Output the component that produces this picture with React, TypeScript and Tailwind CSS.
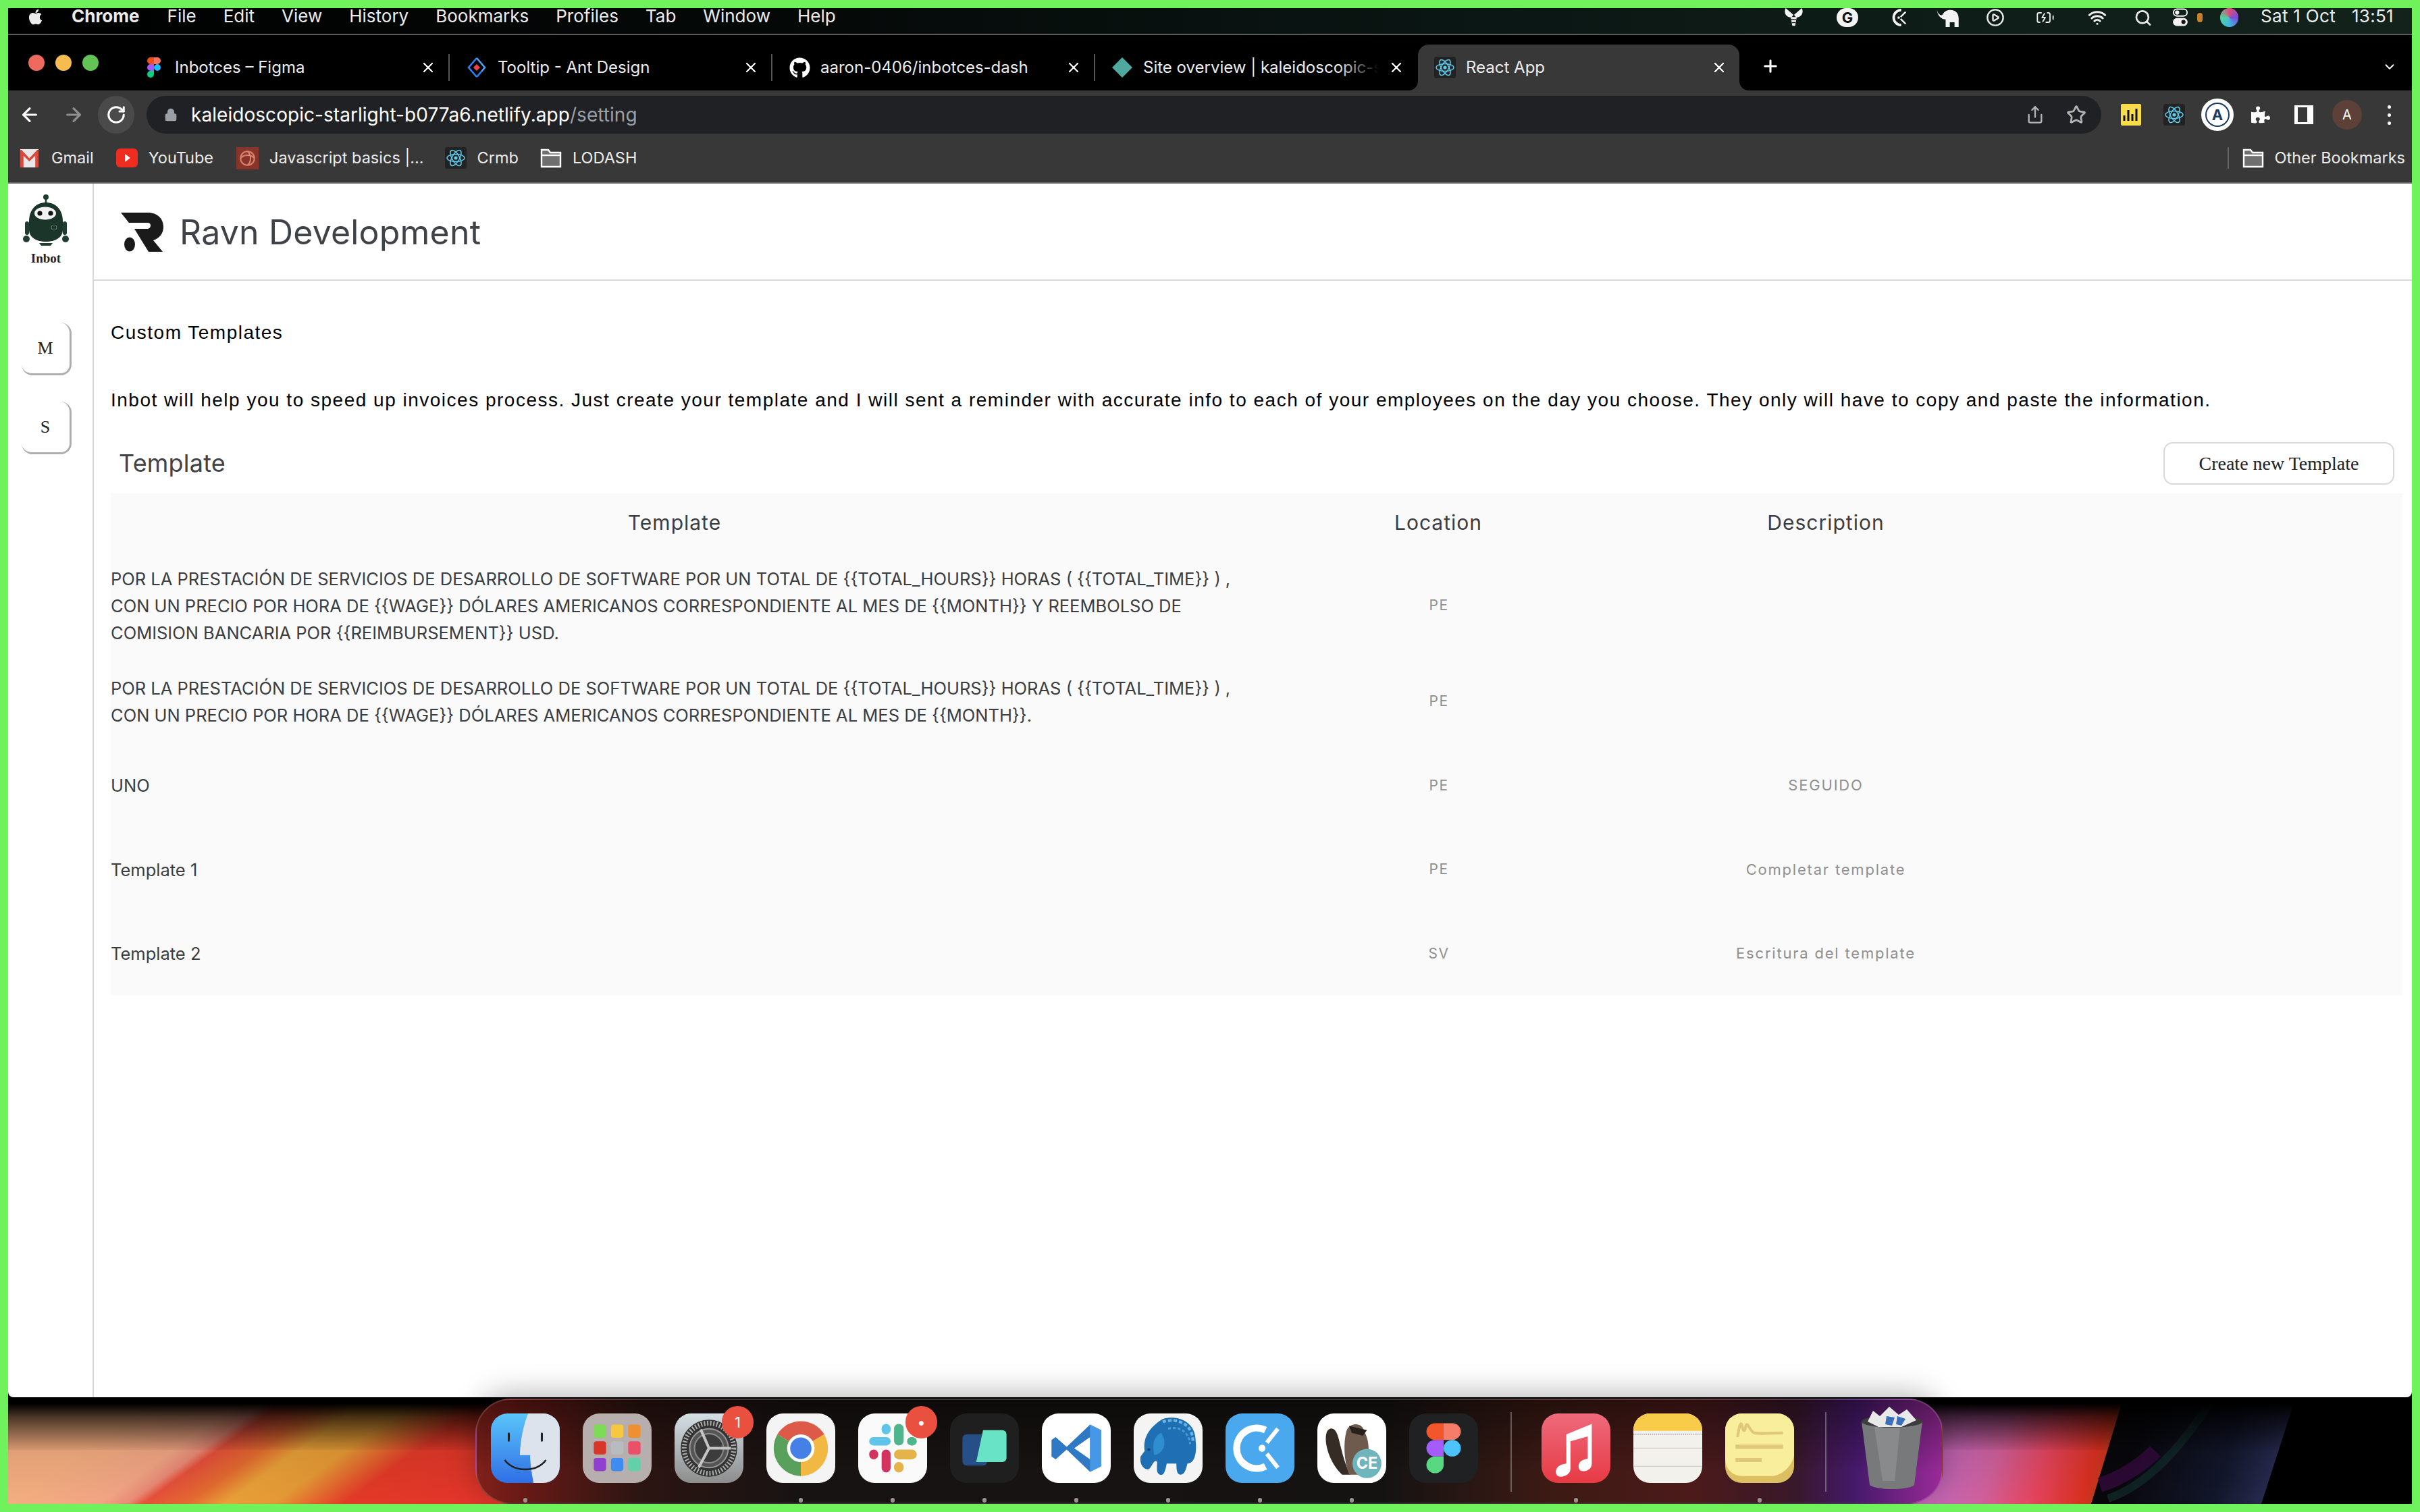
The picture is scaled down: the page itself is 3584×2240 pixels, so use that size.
import type { ReactNode } from 'react';
import {
  ArrowLeft,
  ArrowRight,
  BatteryCharging,
  ChevronDown,
  CirclePlay,
  Lock,
  Plus,
  RotateCw,
  Search,
  Share,
  Star,
  Wifi,
  X,
} from 'lucide-react';
import { FaApple, FaGithub, FaPuzzlePiece } from 'react-icons/fa';

/* ---------- small favicons ---------- */

function ReactIcon({ className = '' }: { className?: string }) {
  return (
    <svg viewBox="0 0 32 32" className={className}>
      <rect width="32" height="32" rx="3" fill="#222" />
      <g fill="none" stroke="#61c9ea" strokeWidth="1.5">
        <ellipse cx="16" cy="16" rx="13" ry="5.5" />
        <ellipse cx="16" cy="16" rx="13" ry="5.5" transform="rotate(60 16 16)" />
        <ellipse cx="16" cy="16" rx="13" ry="5.5" transform="rotate(120 16 16)" />
      </g>
      <circle cx="16" cy="16" r="2.6" fill="#61c9ea" />
    </svg>
  );
}

function FigmaGlyph({ className = '' }: { className?: string }) {
  return (
    <svg viewBox="0 0 20 30" className={className}>
      <path d="M10 0H5a5 5 0 0 0 0 10h5Z" fill="#f24e1e" />
      <path d="M10 0h5a5 5 0 0 1 0 10h-5Z" fill="#ff7262" />
      <path d="M10 10H5a5 5 0 0 0 0 10h5Z" fill="#a259ff" />
      <circle cx="15" cy="15" r="5" fill="#1abcfe" />
      <path d="M5 20h5v5a5 5 0 1 1-5-5Z" fill="#0acf83" />
    </svg>
  );
}

function AntIcon({ className = '' }: { className?: string }) {
  return (
    <svg viewBox="0 0 30 30" className={className}>
      <path d="M15 1 3 15l12 14" fill="none" stroke="#2f80f0" strokeWidth="2.6" />
      <path d="M15 1 27 15l-5 6" fill="none" stroke="#4aa3f5" strokeWidth="2.6" />
      <path d="m22 21-7 8" fill="none" stroke="#2f80f0" strokeWidth="2.6" />
      <path d="m15 10 5 5-5 5-5-5Z" fill="#ef4444" />
    </svg>
  );
}

function FolderIcon({ className = '' }: { className?: string }) {
  return (
    <svg viewBox="0 0 32 30" className={className}>
      <path d="M2 28V3h10l3 4h15v21Z" fill="#6f6f6f" stroke="#fff" strokeWidth="2.4" />
      <path d="M2 11h28" stroke="#fff" strokeWidth="2.4" />
    </svg>
  );
}

function GmailIcon() {
  return (
    <svg viewBox="0 0 30 30" className="h-[31px] w-[29px]">
      <rect x="1" y="1" width="28" height="28" fill="#e8e8e8" />
      <path d="M1 2v27h5V11l9 9 9-9v18h5V2h-2L15 15 3 2Z" fill="#d84a3c" />
    </svg>
  );
}

function YoutubeIcon() {
  return (
    <svg viewBox="0 0 32 28" className="h-[28px] w-[32px]">
      <rect width="32" height="28" rx="6" fill="#ee2d20" />
      <path d="m13 8 8 6-8 6Z" fill="#fff" />
    </svg>
  );
}

function SpiralIcon() {
  return (
    <svg viewBox="0 0 32 32" className="h-[33px] w-[33px]">
      <rect width="32" height="32" fill="#8a3328" />
      <g fill="none" stroke="#d9826f" strokeWidth="2">
        <circle cx="16" cy="16" r="10" />
        <path d="M16 6c6 5 6 15 0 20M6 16c5-6 15-6 20 0" />
      </g>
    </svg>
  );
}

/* ---------- menu bar glyphs ---------- */

function MothGlyph() {
  return (
    <svg viewBox="0 0 35 34" className="h-[28px] w-[35px]">
      <path d="M17 12 3 0c-4 8 0 16 10 17ZM18 12 32 0c4 8 0 16-10 17Z" fill="#f3f3f3" />
      <path d="M12 16h11l-3 16h-5Z" fill="#f3f3f3" />
      <path d="M13 21h9M14 26h7" stroke="#111" strokeWidth="1.8" />
    </svg>
  );
}

function ClockGlyph() {
  return (
    <svg viewBox="0 0 29 30" className="h-[28px] w-[29px]">
      <path d="M19 3a12 12 0 1 0 0 24" fill="none" stroke="#f3f3f3" strokeWidth="4" />
      <path d="m26 6-8 8M18 17l8 8" stroke="#f3f3f3" strokeWidth="2.6" />
      <circle cx="15" cy="15" r="2" fill="#f3f3f3" />
    </svg>
  );
}

function ElephantGlyph() {
  return (
    <svg viewBox="0 0 40 32" className="h-[28px] w-[40px]">
      <path
        d="M1 3c2 6 5 9 9 9 3-6 8-9 14-9 9 0 14 6 14 14v15h-7v-8h-8v8h-7V19C9 19 3 14 1 3Z"
        fill="#f3f3f3"
      />
    </svg>
  );
}

function ControlGlyph() {
  return (
    <svg viewBox="0 0 28 36" className="h-[28px] w-[28px]">
      <rect x="1" y="2" width="26" height="13" rx="6.5" fill="none" stroke="#f3f3f3" strokeWidth="2.5" />
      <circle cx="8" cy="8.5" r="4" fill="#f3f3f3" />
      <rect x="0" y="19" width="28" height="15" rx="7.5" fill="#f3f3f3" />
      <circle cx="20" cy="26.5" r="4" fill="#111" />
    </svg>
  );
}

function MenuBar() {
  const items = ['File', 'Edit', 'View', 'History', 'Bookmarks', 'Profiles', 'Tab', 'Window', 'Help'];
  return (
    <div className="flex h-[38px] items-start bg-[linear-gradient(90deg,#000000_0%,#050a09_35%,#0a1613_60%,#13231c_100%)] pl-[27px] pr-[27px] font-['Inter',sans-serif] text-[26px] leading-[24px] text-[#ececec]">
      <FaApple className="h-[26px] w-[27px] text-[#ececec]" />
      <span className="ml-[40px] font-bold">Chrome</span>
      <div className="ml-[41px] flex gap-[40px]">
        {items.map((m) => (
          <span key={m}>{m}</span>
        ))}
      </div>
      <div className="ml-auto flex h-[28px] items-center">
        <MothGlyph />
        <span className="ml-[46px] flex h-[28px] w-[32px] items-center justify-center rounded-full bg-[#f3f3f3] text-[22px] font-bold text-[#111]">
          G
        </span>
        <span className="ml-[45px]">
          <ClockGlyph />
        </span>
        <span className="ml-[39px]">
          <ElephantGlyph />
        </span>
        <CirclePlay className="ml-[35px] h-[28px] w-[30px]" strokeWidth={2} />
        <BatteryCharging className="ml-[33px] h-[28px] w-[52px]" strokeWidth={1.6} />
        <Wifi className="ml-[35px] h-[28px] w-[32px]" strokeWidth={2.6} />
        <Search className="ml-[38px] h-[27px] w-[28px]" strokeWidth={2.4} />
        <span className="ml-[27px]">
          <ControlGlyph />
        </span>
        <span className="ml-[11px] h-[14px] w-[8px] rounded-full bg-[#c9802a]" />
        <span className="ml-[26px] h-[28px] w-[27px] rounded-full bg-[conic-gradient(#e04b7a,#7a4bd8,#3fb8e0,#50d0a0,#e04b7a)]" />
        <span className="ml-[33px] flex gap-[24px] self-start tracking-[0.3px]">
          <span>Sat 1 Oct</span>
          <span>13:51</span>
        </span>
      </div>
    </div>
  );
}

/* ---------- chrome ---------- */

function Tab({
  icon,
  title,
  active = false,
  fade = false,
}: {
  icon: ReactNode;
  title: string;
  active?: boolean;
  fade?: boolean;
}) {
  return (
    <div
      className={`relative flex h-[68px] w-[476px] flex-none items-center pl-[24px] pr-[18px] ${
        active ? 'rounded-t-[16px] bg-[#383838]' : ''
      }`}
    >
      {active && (
        <>
          <span className="absolute bottom-0 -left-[14px] h-[14px] w-[14px] bg-[#383838]">
            <span className="block h-full w-full rounded-br-[14px] bg-black" />
          </span>
          <span className="absolute bottom-0 -right-[14px] h-[14px] w-[14px] bg-[#383838]">
            <span className="block h-full w-full rounded-bl-[14px] bg-black" />
          </span>
        </>
      )}
      <span className="flex w-[32px] flex-none items-center justify-center">{icon}</span>
      <div className="relative ml-[15px] flex-1 overflow-hidden whitespace-nowrap text-[24px] text-[#ececec]">
        {title}
        {fade && (
          <span className="absolute inset-y-0 right-0 w-[60px] bg-gradient-to-r from-transparent to-black" />
        )}
      </div>
      <X className="ml-[14px] h-[24px] w-[24px] flex-none text-white" strokeWidth={2.2} />
    </div>
  );
}

function TabSep() {
  return <span className="mb-[14px] h-[40px] w-[2px] flex-none self-end bg-[#555555]" />;
}

function TabStrip() {
  return (
    <div className="flex h-[82px] bg-black font-['Inter',sans-serif]">
      <div className="flex w-[176px] flex-none items-center gap-[16px] pb-[1px] pl-[30px]">
        <span className="h-[24px] w-[24px] rounded-full bg-[#ee6a5f]" />
        <span className="h-[24px] w-[24px] rounded-full bg-[#f5bd4f]" />
        <span className="h-[24px] w-[24px] rounded-full bg-[#61c454]" />
      </div>
      <div className="flex items-end">
        <Tab icon={<FigmaGlyph className="h-[30px] w-[20px]" />} title="Inbotces – Figma" />
        <TabSep />
        <Tab icon={<AntIcon className="h-[30px] w-[30px]" />} title="Tooltip - Ant Design" />
        <TabSep />
        <Tab icon={<FaGithub className="h-[31px] w-[31px] text-white" />} title="aaron-0406/inbotces-dash" />
        <TabSep />
        <Tab
          icon={
            <svg viewBox="0 0 30 30" className="h-[30px] w-[30px]">
              <path d="M15 0 30 15 15 30 0 15Z" fill="#4fa99e" />
            </svg>
          }
          title="Site overview | kaleidoscopic-starlight"
          fade
        />
        <span className="w-[2px]" />
        <Tab icon={<ReactIcon className="h-[32px] w-[32px]" />} title="React App" active />
      </div>
      <Plus className="ml-[32px] mt-[32px] h-[28px] w-[28px] text-white" strokeWidth={2.6} />
      <ChevronDown className="ml-auto mr-[22px] mt-[36px] h-[22px] w-[22px] text-white" strokeWidth={2} />
    </div>
  );
}

function Toolbar() {
  return (
    <div className="flex h-[64px] items-center bg-[#383838] pt-[8px] font-['Inter',sans-serif]">
      <ArrowLeft className="ml-[16px] h-[32px] w-[32px] text-white" strokeWidth={2.4} />
      <ArrowRight className="ml-[33px] h-[32px] w-[32px] text-[#8f8f8f]" strokeWidth={2.4} />
      <span className="ml-[20px] flex h-[56px] w-[54px] items-center justify-center rounded-full bg-[#4a4a4a]">
        <RotateCw className="h-[30px] w-[30px] text-white" strokeWidth={2.4} />
      </span>
      <div className="ml-[18px] flex h-[56px] w-[2895px] flex-none items-center rounded-full bg-[#202124] pl-[26px]">
        <Lock className="h-[22px] w-[20px] text-[#9aa0a6]" fill="#9aa0a6" />
        <span className="ml-[20px] text-[28px] tracking-[0.05px] text-white">
          kaleidoscopic-starlight-b077a6.netlify.app<span className="text-[#9aa0a6]">/setting</span>
        </span>
        <Share className="ml-auto h-[32px] w-[28px] text-[#b5b5b5]" strokeWidth={2} />
        <Star className="ml-[32px] mr-[22px] h-[30px] w-[30px] text-[#b5b5b5]" strokeWidth={2.2} />
      </div>
      <svg viewBox="0 0 32 34" className="ml-[28px] h-[34px] w-[32px]">
        <rect x="1" y="1" width="30" height="32" rx="2" fill="#f9dc4a" />
        <path d="M6 18v8M12 10v16M18 16v10M24 8v18" stroke="#111" strokeWidth="3" />
      </svg>
      <ReactIcon className="ml-[32px] h-[32px] w-[32px]" />
      <span className="ml-[24px] flex h-[48px] w-[48px] items-center justify-center rounded-full border-[6px] border-white bg-white text-[22px] font-bold text-[#1c3a66] outline-2 -outline-offset-[8px] outline-[#1c3a66]">
        A
      </span>
      <FaPuzzlePiece className="ml-[26px] h-[28px] w-[28px] text-white" />
      <span className="ml-[36px] h-[28px] w-[28px] border-y-[3px] border-l-[5px] border-r-[9px] border-white" />
      <span className="ml-[28px] flex h-[44px] w-[44px] items-center justify-center rounded-full bg-[#5d4037] text-[20px] text-white">
        A
      </span>
      <span className="ml-[38px] flex flex-col gap-[7px]">
        <span className="h-[5px] w-[5px] rounded-full bg-white" />
        <span className="h-[5px] w-[5px] rounded-full bg-white" />
        <span className="h-[5px] w-[5px] rounded-full bg-white" />
      </span>
    </div>
  );
}

function Bookmark({ icon, label, left }: { icon: ReactNode; label: string; left: string }) {
  return (
    <div className={`flex items-center gap-[16px] ${left}`}>
      {icon}
      <span className="whitespace-nowrap">{label}</span>
    </div>
  );
}

function BookmarksBar() {
  return (
    <div className="flex h-[72px] items-center bg-[#383838] pl-[17px] pr-[10px] font-['Inter',sans-serif] text-[23.5px] text-[#ececec]">
      <Bookmark icon={<GmailIcon />} label="Gmail" left="gap-[18px]" />
      <Bookmark icon={<YoutubeIcon />} label="YouTube" left="ml-[33px]" />
      <Bookmark icon={<SpiralIcon />} label="Javascript basics |..." left="ml-[34px]" />
      <Bookmark icon={<ReactIcon className="h-[34px] w-[32px]" />} label="Crmb" left="ml-[31px]" />
      <Bookmark icon={<FolderIcon className="h-[30px] w-[32px]" />} label="LODASH" left="ml-[32px]" />
      <span className="ml-auto h-[32px] w-[2px] bg-[#666666]" />
      <Bookmark icon={<FolderIcon className="h-[32px] w-[32px]" />} label="Other Bookmarks" left="ml-[20px]" />
    </div>
  );
}

/* ---------- app ---------- */

function RobotLogo() {
  return (
    <svg viewBox="0 0 68 76" className="h-[76px] w-[68px]">
      <circle cx="34" cy="4" r="4" fill="#1f3d31" />
      <path d="M34 6v10" stroke="#1f3d31" strokeWidth="2.5" />
      <path d="M9 40C9 22 20 12 34 12s25 10 25 28v12c0 12-11 18-25 18S9 64 9 52Z" fill="#1b352b" />
      <rect x="3" y="40" width="6" height="20" rx="3" fill="#1f3d31" />
      <rect x="59" y="40" width="6" height="20" rx="3" fill="#1f3d31" />
      <circle cx="5" cy="66" r="5" fill="#1f3d31" />
      <circle cx="63" cy="66" r="5" fill="#1f3d31" />
      <path d="M24 72h20l-3 4H27Z" fill="#1f3d31" />
      <ellipse cx="33" cy="28" rx="16" ry="9.5" fill="#f2f2f2" />
      <circle cx="25" cy="28" r="3.6" fill="#111" />
      <circle cx="41" cy="28" r="3.6" fill="#111" />
      <circle cx="46" cy="49" r="4" fill="none" stroke="#5c7a6c" strokeWidth="1" />
    </svg>
  );
}

function SideButton({ label }: { label: string }) {
  return (
    <div className="flex h-[78px] w-[74px] items-center justify-center rounded-[16px] border-r-[3px] border-b-[3px] border-[#aeaeae] font-['Liberation_Serif',serif] text-[26px] text-[#222222]">
      {label}
    </div>
  );
}

function Sidebar() {
  return (
    <aside className="flex w-[127px] flex-none flex-col items-center border-r-2 border-[#d9d9d9] pr-[13px] pt-[16px]">
      <RobotLogo />
      <span className="mt-[9px] font-['Liberation_Serif',serif] text-[19px] font-bold leading-[20px] text-[#222222]">
        Inbot
      </span>
      <div className="mt-[85px] flex flex-col gap-[39px] pl-[1px]">
        <SideButton label="M" />
        <SideButton label="S" />
      </div>
    </aside>
  );
}

const rows: { template: ReactNode; location: string; description: string; rowClass: string }[] = [
  {
    template: (
      <>
        POR LA PRESTACIÓN DE SERVICIOS DE DESARROLLO DE SOFTWARE POR UN TOTAL DE {'{{TOTAL_HOURS}}'} HORAS ({' '}
        {'{{TOTAL_TIME}}'} ) ,<br />
        CON UN PRECIO POR HORA DE {'{{WAGE}}'} DÓLARES AMERICANOS CORRESPONDIENTE AL MES DE {'{{MONTH}}'} Y REEMBOLSO DE
        <br />
        COMISION BANCARIA POR {'{{REIMBURSEMENT}}'} USD.
      </>
    ),
    location: 'PE',
    description: '',
    rowClass: 'h-[160px]',
  },
  {
    template: (
      <>
        POR LA PRESTACIÓN DE SERVICIOS DE DESARROLLO DE SOFTWARE POR UN TOTAL DE {'{{TOTAL_HOURS}}'} HORAS ({' '}
        {'{{TOTAL_TIME}}'} ) ,<br />
        CON UN PRECIO POR HORA DE {'{{WAGE}}'} DÓLARES AMERICANOS CORRESPONDIENTE AL MES DE {'{{MONTH}}'}.
      </>
    ),
    location: 'PE',
    description: '',
    rowClass: 'h-[124px]',
  },
  { template: 'UNO', location: 'PE', description: 'SEGUIDO', rowClass: 'h-[125px]' },
  { template: 'Template 1', location: 'PE', description: 'Completar template', rowClass: 'h-[124px]' },
  { template: 'Template 2', location: 'SV', description: 'Escritura del template', rowClass: 'h-[125px]' },
];

function TemplateTable() {
  return (
    <div className="mr-[2px] bg-[#fafafa] font-['Inter',sans-serif]">
      <div className="grid h-[86px] grid-cols-[1670px_592px_556px_1fr] items-center text-center text-[30px] tracking-[1px] text-[#3a3d42]">
        <span>Template</span>
        <span>Location</span>
        <span>Description</span>
        <span />
      </div>
      {rows.map((r, i) => (
        <div key={i} className={`grid grid-cols-[1670px_592px_556px_1fr] items-center ${r.rowClass}`}>
          <div className="pt-[1px] text-[25.5px] leading-[40px] text-[#3a3d42]">{r.template}</div>
          <div className="pl-[2px] text-center text-[21px] tracking-[1.6px] text-[#8f8f8f]">{r.location}</div>
          <div className="text-center text-[22px] tracking-[1.8px] text-[#8f8f8f]">{r.description}</div>
          <span />
        </div>
      ))}
    </div>
  );
}

function Page() {
  return (
    <div className="flex h-[1798px] flex-none rounded-b-[8px] bg-white">
      <Sidebar />
      <main className="flex min-w-0 flex-1 flex-col">
        <header className="flex h-[144px] flex-none items-center border-b-2 border-[#d9d9d9] pl-[40px] pt-[1px]">
          <svg viewBox="0 0 63 58" className="h-[58px] w-[63px]">
            <path
              d="M0 0H40C54 0 63 9 63 21 63 31 57 38 48 41L62 58H41L20 24H38C42 24 44 22 44 19 44 16 42 15 39 15H12Z"
              fill="#1a1a1a"
            />
            <ellipse cx="13" cy="47" rx="8" ry="10.5" fill="#1a1a1a" />
          </svg>
          <span className="ml-[24px] font-['Inter',sans-serif] text-[50px] leading-none tracking-[0.2px] text-[#3f4247]">
            Ravn Development
          </span>
        </header>
        <div className="pl-[25px] pr-[12px]">
          <p className="mt-[59px] font-['Liberation_Sans',sans-serif] text-[28px] leading-[36px] tracking-[1.5px] text-black">
            Custom Templates
          </p>
          <p className="mt-[64px] whitespace-nowrap font-['Liberation_Sans',sans-serif] text-[28px] leading-[36px] tracking-[1.5px] text-black">
            Inbot will help you to speed up invoices process. Just create your template and I will sent a reminder with
            accurate info to each of your employees on the day you choose. They only will have to copy and paste the
            information.
          </p>
          <div className="mt-[44px] flex h-[63px] items-center justify-between pl-[12px] pr-[14px]">
            <h2 className="-mt-[2px] font-['Inter',sans-serif] text-[36px] tracking-[0.2px] text-[#3f4247]">Template</h2>
            <button className="h-[63px] w-[342px] rounded-[14px] border-2 border-[#d9d9d9] bg-white font-['Liberation_Serif',serif] text-[28px] text-[#222222]">
              Create new Template
            </button>
          </div>
          <div className="mt-[13px]">
            <TemplateTable />
          </div>
        </div>
      </main>
    </div>
  );
}

/* ---------- dock icons, all on a 100x100 box ---------- */

function Pill({ x, y, w, h, fill }: { x: number; y: number; w: number; h: number; fill: string }) {
  return <rect x={x} y={y} width={w} height={h} rx={Math.min(w, h) / 2} fill={fill} />;
}

const dockIcons: Record<string, ReactNode> = {
  finder: (
    <>
      <defs>
        <linearGradient id="fb" x1="0" y1="0" x2="0" y2="1">
          <stop offset="0" stopColor="#5ac5fa" />
          <stop offset="1" stopColor="#2f6fe6" />
        </linearGradient>
      </defs>
      <rect width="100" height="100" rx="24" fill="url(#fb)" />
      <path
        d="M54 0H76A24 24 0 0 1 100 24V76A24 24 0 0 1 76 100H62C59 85 57 72 57 60H42C43 38 47 18 54 0Z"
        fill="#dde3ec"
      />
      <path d="M26 29v10M74 29v10" stroke="#222" strokeWidth="3" strokeLinecap="round" />
      <path d="M20 67C34 85 66 85 80 67" fill="none" stroke="#222" strokeWidth="2.6" />
    </>
  ),
  launchpad: (
    <>
      <rect width="100" height="100" rx="24" fill="#b7aeae" />
      {[
        ['#7ddc55', '#f8c740', '#ee9030'],
        ['#d9362a', '#b8bcc0', '#ec4f68'],
        ['#9040d0', '#3f8cf0', '#62d0a8'],
      ].map((row, r) =>
        row.map((c, k) => <rect key={`${r}${k}`} x={16 + k * 25} y={16 + r * 24} width="18" height="19" rx="4" fill={c} />),
      )}
    </>
  ),
  settings: (
    <>
      <defs>
        <linearGradient id="sb" x1="0" y1="0" x2="0" y2="1">
          <stop offset="0" stopColor="#d4dfe4" />
          <stop offset="1" stopColor="#8d8d8d" />
        </linearGradient>
      </defs>
      <rect width="100" height="100" rx="24" fill="url(#sb)" />
      <circle cx="50" cy="50" r="41" fill="#333" />
      <circle cx="50" cy="50" r="36" fill="none" stroke="#aaa" strokeWidth="7" strokeDasharray="2 2.5" />
      <circle cx="50" cy="50" r="28" fill="#555" stroke="#999" strokeWidth="2" />
      <circle cx="50" cy="50" r="21" fill="#3c3c3c" stroke="#888" strokeWidth="2" />
      <path d="M50 50 38 23M50 50h32M50 50 35 78" stroke="#c4c4c4" strokeWidth="4" />
    </>
  ),
  chrome: (
    <>
      <rect width="100" height="100" rx="24" fill="#f4f4f4" />
      <path d="M50 50 16 30A40 40 0 0 1 84 30Z" fill="#dc5a47" />
      <path d="M50 50 16 30A40 40 0 0 0 50 90Z" fill="#58a05c" />
      <path d="M50 50 84 30A40 40 0 0 1 50 90Z" fill="#f2b942" />
      <circle cx="50" cy="50" r="20" fill="#fff" />
      <circle cx="50" cy="50" r="15.5" fill="#4480e6" />
    </>
  ),
  slack: (
    <>
      <rect width="100" height="100" rx="24" fill="#fafafa" />
      <Pill x={34} y={15} w={13} h={15} fill="#5fc3ea" />
      <Pill x={16} y={34} w={31} h={12} fill="#5fc3ea" />
      <Pill x={52} y={15} w={14} h={31} fill="#4fb58c" />
      <Pill x={71} y={34} w={14} h={12} fill="#4fb58c" />
      <Pill x={16} y={52} w={13} h={14} fill="#d3345f" />
      <Pill x={34} y={52} w={13} h={33} fill="#d3345f" />
      <Pill x={52} y={52} w={33} h={14} fill="#e4b34a" />
      <Pill x={52} y={70} w={14} h={15} fill="#e4b34a" />
    </>
  ),
  cross: (
    <>
      <rect width="100" height="100" rx="24" fill="#1f1f1f" />
      <rect x="18" y="30" width="36" height="45" rx="6" fill="#254f86" />
      <path d="M48 24H76A6 6 0 0 1 82 30V64A6 6 0 0 1 76 70H38Z" fill="#69e3c6" />
    </>
  ),
  vscode: (
    <>
      <rect width="100" height="100" rx="24" fill="#fff" />
      <path d="M70 16 36 48 20 34 14 38V62L20 66 36 52 70 84 86 76V24ZM70 34V66L47 50Z" fill="#2f78c4" fillRule="evenodd" />
      <path d="M70 16 86 24V76L70 84V66Z" fill="#4698e6" />
    </>
  ),
  elephant: (
    <>
      <rect width="100" height="100" rx="24" fill="#f4f4f4" />
      <path
        d="M42 8C62 2 90 10 90 40 92 58 88 72 78 72 76 80 74 88 68 88 62 88 62 78 62 72 58 72 52 72 48 72 46 82 44 90 38 88 32 86 34 76 34 70 30 64 26 78 22 80 14 82 8 72 10 62L16 54C14 42 16 24 42 8Z"
        fill="#1f6fb5"
      />
      <path d="M42 12C62 6 86 14 86 40" fill="none" stroke="#6bb3e0" strokeWidth="4" strokeDasharray="5 3" />
      <path d="M50 22C66 18 80 26 82 44" fill="none" stroke="#4a9ad0" strokeWidth="3" strokeDasharray="4 3" />
      <path d="M40 28C30 32 26 44 30 60 42 58 50 44 40 28Z" fill="#2f8ed0" />
      <circle cx="22" cy="52" r="2" fill="#0d3f6e" />
    </>
  ),
  clockify: (
    <>
      <rect width="100" height="100" rx="24" fill="#4aa8ee" />
      <path d="M58 24A29 29 0 1 0 58 76" fill="none" stroke="#fff" strokeWidth="10" />
      <path d="M76 22 60 42M60 58 76 78" stroke="#fff" strokeWidth="6" />
      <circle cx="53" cy="50" r="5" fill="#fff" />
    </>
  ),
  dbeaver: (
    <>
      <rect width="100" height="100" rx="24" fill="#fff" />
      <path d="M14 26C8 40 18 72 36 88H48C36 66 34 42 28 28 24 20 18 20 14 26Z" fill="#362c26" />
      <path d="M42 26C46 12 66 12 68 26 78 42 76 70 64 88H46C38 66 38 42 42 26Z" fill="#6f5b4d" />
      <path d="M46 18 72 24 66 32 50 28Z" fill="#26201c" />
      <circle cx="72" cy="72" r="21" fill="#6fb5be" />
      <text x="72" y="80" textAnchor="middle" fontSize="23" fontWeight="700" fill="#fff" fontFamily="Inter, sans-serif">
        CE
      </text>
    </>
  ),
  figma: (
    <>
      <rect width="100" height="100" rx="24" fill="#1f2122" />
      <g transform="translate(25 14) scale(2.5 2.4)">
        <path d="M10 0H5a5 5 0 0 0 0 10h5Z" fill="#f2562a" />
        <path d="M10 0h5a5 5 0 0 1 0 10h-5Z" fill="#f57d6a" />
        <path d="M10 10H5a5 5 0 0 0 0 10h5Z" fill="#a45cff" />
        <circle cx="15" cy="15" r="5" fill="#4dc2fb" />
        <path d="M5 20h5v5a5 5 0 1 1-5-5Z" fill="#58d880" />
      </g>
    </>
  ),
  music: (
    <>
      <defs>
        <linearGradient id="mb" x1="0" y1="0" x2="0" y2="1">
          <stop offset="0" stopColor="#ee6a7c" />
          <stop offset="1" stopColor="#e73a44" />
        </linearGradient>
      </defs>
      <rect width="100" height="100" rx="24" fill="url(#mb)" />
      <path
        d="M36 30 73 15V72C73 80 66 83 60 83 55 83 53 78 54 74 55 69 60 66 67 65V33L42 40V79C42 87 35 91 28 91 22 91 20 86 21 82 22 76 28 73 36 72Z"
        fill="#fff"
      />
    </>
  ),
  notes: (
    <>
      <rect width="100" height="100" rx="24" fill="#f3f1ec" />
      <path d="M0 25V24A24 24 0 0 1 24 0H76A24 24 0 0 1 100 24V25Z" fill="#f8cb49" />
      <path d="M0 30h100" stroke="#bbb" strokeWidth="2" strokeDasharray="1.5 1.5" />
      <path d="M0 50h100M0 76h100" stroke="#d5d3d0" strokeWidth="1.6" />
    </>
  ),
  stickies: (
    <>
      <rect width="100" height="100" rx="24" fill="#dcbf62" />
      <path d="M24 0H76A24 24 0 0 1 100 24V60C98 74 84 88 70 90H24A24 24 0 0 1 0 66V24A24 24 0 0 1 24 0Z" fill="#f9ee9c" />
      <path d="M18 34C20 20 22 12 24 16 26 26 28 28 30 18 32 10 36 26 42 28 50 30 56 28 84 28" fill="none" stroke="#dfc878" strokeWidth="4" />
      <path d="M15 45H84V51H15ZM15 64H53V70H15Z" fill="#dfc878" />
    </>
  ),
};

function DockIcon({ name, dot = false, badge }: { name: string; dot?: boolean; badge?: string }) {
  return (
    <div className="relative flex w-[102px] flex-none flex-col items-center">
      <svg viewBox="0 0 100 100" preserveAspectRatio="none" className="h-[103px] w-[102px]">
        {dockIcons[name]}
      </svg>
      <span className={`mt-[22px] h-[7px] w-[6px] rounded-full ${dot ? 'bg-[#9b9090]' : 'bg-transparent'}`} />
      {badge && (
        <span className="absolute -top-[11px] -right-[15px] flex h-[48px] w-[47px] items-center justify-center rounded-full bg-[#e9503f] font-['Inter',sans-serif] text-[22px] text-white">
          {badge}
        </span>
      )}
    </div>
  );
}

function DockSep({ left }: { left: string }) {
  return <span className={`-mt-[2px] h-[118px] w-[2px] flex-none bg-white/30 ${left}`} />;
}

function Wallpaper() {
  return (
    <svg viewBox="0 0 3560 158" className="absolute inset-0 h-full w-full" aria-hidden>
      <defs>
        <linearGradient id="wl" gradientUnits="userSpaceOnUse" x1="0" y1="158" x2="275" y2="538">
          <stop offset="0" stopColor="#f4ae80" />
          <stop offset="0.17" stopColor="#f2a584" />
          <stop offset="0.22" stopColor="#ea8a76" />
          <stop offset="0.25" stopColor="#e6503a" />
          <stop offset="0.33" stopColor="#e56a30" />
          <stop offset="0.4" stopColor="#e8a038" />
          <stop offset="0.49" stopColor="#e69a35" />
          <stop offset="0.62" stopColor="#e33a28" />
          <stop offset="1" stopColor="#e3322c" />
        </linearGradient>
        <linearGradient id="wr2" gradientUnits="userSpaceOnUse" x1="2860" y1="158" x2="3082" y2="230">
          <stop offset="0" stopColor="#c766b4" />
          <stop offset="0.25" stopColor="#d0609c" />
          <stop offset="0.55" stopColor="#e5455e" />
          <stop offset="0.85" stopColor="#da3020" />
          <stop offset="1" stopColor="#a8421c" />
        </linearGradient>
        <linearGradient id="wb" gradientUnits="userSpaceOnUse" x1="3120" y1="158" x2="3337" y2="228">
          <stop offset="0" stopColor="#08080c" />
          <stop offset="0.6" stopColor="#12162a" />
          <stop offset="1" stopColor="#2c2f58" />
        </linearGradient>
        <linearGradient id="wf" x1="0" y1="0" x2="0" y2="1">
          <stop offset="0" stopColor="#000" stopOpacity="1" />
          <stop offset="0.06" stopColor="#000" stopOpacity="1" />
          <stop offset="0.19" stopColor="#000" stopOpacity="0.68" />
          <stop offset="0.4" stopColor="#000" stopOpacity="0.3" />
          <stop offset="0.49" stopColor="#000" stopOpacity="0.14" />
          <stop offset="0.5" stopColor="#000" stopOpacity="0.08" />
          <stop offset="1" stopColor="#000" stopOpacity="0" />
        </linearGradient>
      </defs>
      <rect width="3560" height="158" fill="#000" />
      <rect width="1000" height="158" fill="url(#wl)" />
      <rect x="2600" width="545" height="158" fill="url(#wr2)" />
      <polygon points="3085,158 3145,0 3600,0 3600,158" fill="#000" />
      <polygon points="3085,158 3133,0 3388,0 3337,158" fill="url(#wb)" />
      <path d="M3110 150C3170 130 3220 70 3260 10" fill="none" stroke="#143230" strokeWidth="12" opacity="0.6" />
      <path d="M3098 130C3130 120 3160 100 3180 80" fill="none" stroke="#3a0a44" strokeWidth="22" opacity="0.7" />
      <rect width="3560" height="158" fill="url(#wf)" />
    </svg>
  );
}

function Dock() {
  return (
    <div className="relative z-10 h-[158px] flex-none">
      <Wallpaper />
      <div className="absolute left-[692px] top-[2px] h-[156px] w-[2174px] rounded-[52px] border-2 border-white/15 bg-[linear-gradient(180deg,rgba(0,0,0,0.4),rgba(0,0,0,0)_70%),linear-gradient(90deg,#80201a_0%,#6a1a16_3%,#2c1512_11%,#171312_22%,#151312_62%,#3c1a14_73%,#4c1a1a_83%,#38182a_90%,#44196a_94%,#9a2a98_100%)] shadow-[0_-8px_44px_rgba(0,0,0,0.28)]">
        <div className="flex items-start pl-[21px] pt-[20px]">
          <div className="flex gap-[34px]">
            <DockIcon name="finder" dot />
            <DockIcon name="launchpad" />
            <DockIcon name="settings" badge="1" />
            <DockIcon name="chrome" dot />
            <DockIcon name="slack" dot badge="•" />
            <DockIcon name="cross" dot />
            <DockIcon name="vscode" dot />
            <DockIcon name="elephant" dot />
            <DockIcon name="clockify" dot />
            <DockIcon name="dbeaver" dot />
            <DockIcon name="figma" />
          </div>
          <DockSep left="ml-[48px]" />
          <div className="ml-[44px] flex gap-[34px]">
            <DockIcon name="music" dot />
            <DockIcon name="notes" />
            <DockIcon name="stickies" dot />
          </div>
          <DockSep left="ml-[46px]" />
          <svg viewBox="0 0 92 124" className="-mt-[10px] ml-[51px] h-[124px] w-[92px]">
            <path d="M1 22H91L79 116C70 124 22 124 13 116Z" fill="#77797a" />
            <path d="M20 30 32 110H50L58 30Z" fill="#9a9c9d" opacity="0.5" />
            <ellipse cx="46" cy="22" rx="45" ry="9" fill="#3d3d3d" />
            <path d="M10 22 18 6 28 14 42 0 56 12 68 4 82 20 60 30H26Z" fill="#e8e8e8" />
            <path d="M38 14 50 16 46 28 36 26ZM54 14 66 18 60 28 52 26Z" fill="#3a70b8" />
          </svg>
        </div>
      </div>
    </div>
  );
}

export default function App() {
  return (
    <div className="h-[2240px] w-[3584px] bg-[#6ff25c] p-[12px]">
      <div className="flex h-[2216px] w-[3560px] flex-col bg-black">
        <MenuBar />
        <div className="h-[2px] flex-none bg-[#5a5a5a]" />
        <TabStrip />
        <Toolbar />
        <BookmarksBar />
        <div className="h-[2px] flex-none bg-[#666666]" />
        <div className="flex flex-1 flex-col overflow-hidden">
          <Page />
          <Dock />
        </div>
      </div>
    </div>
  );
}
